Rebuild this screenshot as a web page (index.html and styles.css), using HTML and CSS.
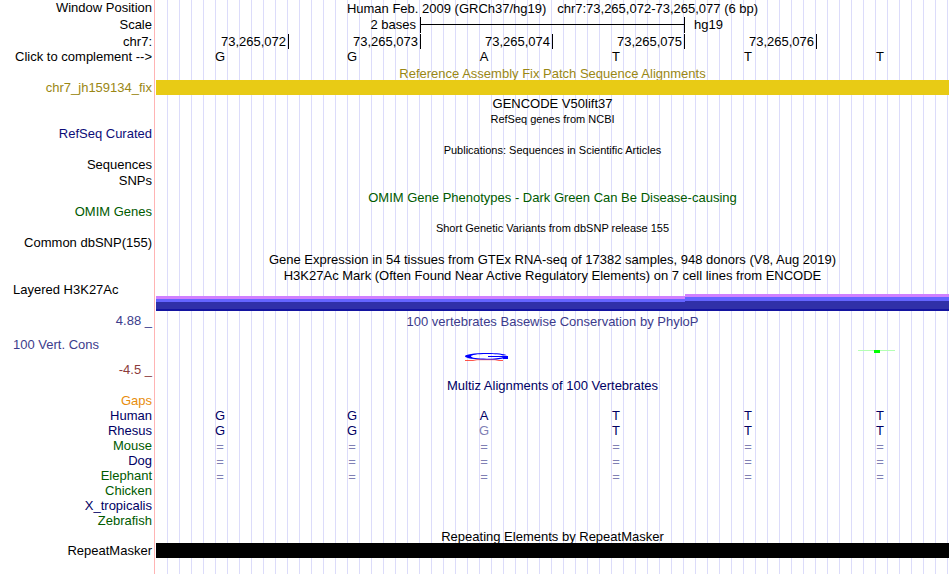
FILE: index.html
```
<!DOCTYPE html>
<html lang="en">
<head>
    <meta charset="UTF-8">
    <meta name="viewport" content="width=device-width, initial-scale=1.0">
    <title>Human chr7:73,265,072-73,265,077</title>
    <link rel="stylesheet" href="styles.css">
</head>
<body>
    <main class="browser">
        <!-- position and ruler -->
        <div class="row tall">
            <div class="label">Window Position</div>
            <div class="title">Human Feb. 2009 (GRCh37/hg19) &nbsp; chr7:73,265,072-73,265,077 (6 bp)</div>
        </div>
        <div class="row scale-row">
            <div class="label">Scale</div>
            <div class="bases">
                <span class="scale-size">2 bases</span>
                <span class="scale-bar"></span>
                <span class="scale-db">hg19</span>
            </div>
        </div>
        <div class="row ruler-row">
            <div class="label">chr7:</div>
            <div class="bases">
                <span class="tick">73,265,072</span>
                <span class="tick">73,265,073</span>
                <span class="tick">73,265,074</span>
                <span class="tick">73,265,075</span>
                <span class="tick">73,265,076</span>
            </div>
        </div>
        <div class="row tall">
            <button type="button" class="label">Click to complement --&gt;</button>
            <div class="bases letters">
                <span>G</span><span>G</span><span>A</span><span>T</span><span>T</span><span>T</span>
            </div>
        </div>

        <!-- fix patches -->
        <div class="row olive">
            <div class="label"></div>
            <div class="title">Reference Assembly Fix Patch Sequence Alignments</div>
        </div>
        <div class="row olive">
            <div class="label">chr7_jh159134_fix</div>
            <div class="bar gold"></div>
        </div>

        <!-- genes -->
        <div class="row tall">
            <div class="label"></div>
            <div class="title">GENCODE V50lift37</div>
        </div>
        <div class="row">
            <div class="label"></div>
            <div class="title small">RefSeq genes from NCBI</div>
        </div>
        <div class="row tall blue">
            <div class="label">RefSeq Curated</div>
        </div>
        <div class="row">
            <div class="label"></div>
            <div class="title small">Publications: Sequences in Scientific Articles</div>
        </div>
        <div class="row tall">
            <div class="label">Sequences</div>
        </div>
        <div class="row tall">
            <div class="label">SNPs</div>
        </div>
        <div class="row green">
            <div class="label"></div>
            <div class="title">OMIM Gene Phenotypes - Dark Green Can Be Disease-causing</div>
        </div>
        <div class="row tall green">
            <div class="label">OMIM Genes</div>
        </div>
        <div class="row">
            <div class="label"></div>
            <div class="title small">Short Genetic Variants from dbSNP release 155</div>
        </div>
        <div class="row tall">
            <div class="label">Common dbSNP(155)</div>
        </div>

        <!-- expression and regulation -->
        <div class="row tall">
            <div class="label"></div>
            <div class="title">Gene Expression in 54 tissues from GTEx RNA-seq of 17382 samples, 948 donors (V8, Aug 2019)</div>
        </div>
        <div class="row">
            <div class="label"></div>
            <div class="title">H3K27Ac Mark (Often Found Near Active Regulatory Elements) on 7 cell lines from ENCODE</div>
        </div>
        <div class="row signal-row">
            <div class="label left">Layered H3K27Ac</div>
            <div class="signal">
                <div class="signal-low"></div>
                <div class="signal-high"></div>
            </div>
        </div>

        <!-- conservation -->
        <div class="row slate">
            <div class="label">4.88 _</div>
            <div class="title">100 vertebrates Basewise Conservation by PhyloP</div>
        </div>
        <div class="row cons-row slate">
            <div class="label left">100 Vert. Cons</div>
            <div class="bases logos">
                <svg class="logo-g" width="46" height="34" viewBox="-2 0 46 34">
                    <path fill="none" stroke="#ff2a1a" stroke-width="0.8" d="M0 32.5H8L12 31.7H30L34 32.5H38"/>
                    <path fill="#0000ff" d="M42 27.2C39 25.9 32 25 22 25C9 25 0 26.4 0 28.3C0 30.3 9 31.6 22 31.6C29 31.6 35 31.2 38 30.4V31H43V28H23V28.9H38C35 30 29 30.7 22 30.7C12 30.7 6 29.8 6 28.3C6 26.8 12 25.9 22 25.9C30 25.9 36 26.4 38 27.4Z"/>
                </svg>
                <svg class="logo-t" width="48" height="34" viewBox="0 0 48 34">
                    <path fill="#b4ffb4" d="M0 22H37V23H0Z"/>
                    <path fill="#00ff00" d="M16 22H22V25H16Z"/>
                </svg>
            </div>
        </div>
        <div class="row maroon">
            <div class="label">-4.5 _</div>
        </div>

        <!-- multiz alignment -->
        <div class="row tall navy">
            <div class="label"></div>
            <div class="title">Multiz Alignments of 100 Vertebrates</div>
        </div>
        <div class="row orange">
            <div class="label">Gaps</div>
        </div>
        <div class="row navy">
            <div class="label">Human</div>
            <div class="bases letters">
                <span>G</span><span>G</span><span>A</span><span>T</span><span>T</span><span>T</span>
            </div>
        </div>
        <div class="row navy">
            <div class="label">Rhesus</div>
            <div class="bases letters">
                <span>G</span><span>G</span><span class="faded">G</span><span>T</span><span>T</span><span>T</span>
            </div>
        </div>
        <div class="row green">
            <div class="label">Mouse</div>
            <div class="bases letters unaligned">
                <span>=</span><span>=</span><span>=</span><span>=</span><span>=</span><span>=</span>
            </div>
        </div>
        <div class="row navy">
            <div class="label">Dog</div>
            <div class="bases letters unaligned">
                <span>=</span><span>=</span><span>=</span><span>=</span><span>=</span><span>=</span>
            </div>
        </div>
        <div class="row green">
            <div class="label">Elephant</div>
            <div class="bases letters unaligned">
                <span>=</span><span>=</span><span>=</span><span>=</span><span>=</span><span>=</span>
            </div>
        </div>
        <div class="row green">
            <div class="label">Chicken</div>
        </div>
        <div class="row navy">
            <div class="label">X_tropicalis</div>
        </div>
        <div class="row green">
            <div class="label">Zebrafish</div>
        </div>

        <!-- repeats -->
        <div class="row">
            <div class="label"></div>
            <div class="title">Repeating Elements by RepeatMasker</div>
        </div>
        <div class="row">
            <div class="label">RepeatMasker</div>
            <div class="bar black"></div>
        </div>
    </main>
</body>
</html>
```
FILE: styles.css
```
body {
    margin: 0;
    background-color: white;
    color: #000;
    font-family: "Liberation Sans", Arial, Helvetica, sans-serif;
    font-size: 13px;
    line-height: 15px;
}
.browser {
    box-sizing: border-box;
    min-height: 100vh;
    padding-right: 1px;
    /* red divider, white label column, then a guideline every 12px */
    background:
        linear-gradient(#ffb4b4, #ffb4b4) 154px 0 / 1px 100% no-repeat,
        linear-gradient(white, white) 0 0 / 156px 100% no-repeat,
        repeating-linear-gradient(to right, #dcdcfa 0 1px, transparent 1px 12px) 11px 0;
}
.row {
    display: grid;
    grid-template-columns: 152px 1fr;
    column-gap: 4px;
    min-height: 15px;
}
.tall {
    min-height: 16px;
    line-height: 16px;
}
.label {
    text-align: right;
    white-space: nowrap;
}
.label.left {
    padding-left: 13px;
    text-align: left;
}
button.label {
    padding: 0;
    border: none;
    background: none;
    color: inherit;
    font: inherit;
    cursor: pointer;
}
.title {
    padding-top: 1px;
    margin-bottom: -1px;
    text-align: center;
    white-space: nowrap;
}
.small {
    font-size: 11px;
}
.bases {
    display: grid;
    grid-template-columns: repeat(6, 1fr);
    margin-right: 1px;
}
.letters {
    text-align: center;
}
.letters span {
    padding-right: 4px;
}
.scale-row {
    padding-top: 1px;
    line-height: 16px;
}
.scale-size {
    grid-column: 1 / 3;
    padding-right: 4px;
    text-align: right;
}
.scale-bar {
    grid-column: 3 / 5;
    margin-right: -1px;
    border: solid #000;
    border-width: 0 1px;
    background: linear-gradient(#000, #000) 0 7px / 100% 1px no-repeat;
}
.scale-db {
    padding-left: 10px;
}
.ruler-row {
    padding-top: 1px;
}
.tick {
    margin-right: -1px;
    padding-right: 2px;
    border-right: 1px solid #000;
    text-align: right;
}
.gold {
    background-color: #e8cb15;
}
.black {
    background-color: #000;
}
.signal-row {
    padding-bottom: 2px;
}
.signal {
    display: grid;
    grid-template-columns: 2fr 1fr;
    align-items: end;
    height: 29px;
}
.signal-low {
    height: 15px;
    background: linear-gradient(#d080ff 3px, #6464ff 3px 6px, #3030a8 6px 13px, #1414a0 13px);
}
.signal-high {
    height: 17px;
    background: linear-gradient(#d080ff 3px, #6464ff 3px 7px, #3030a8 7px 15px, #1414a0 15px);
}
.cons-row {
    line-height: 34px;
}
.logos {
    justify-items: center;
}
.logos svg {
    display: block;
}
.logo-g {
    grid-column: 3;
}
.logo-t {
    grid-column: 6;
}
.olive {
    color: #9a8714;
}
.blue {
    color: #0c0c78;
}
.navy {
    color: #000064;
}
.green {
    color: #005a00;
}
.slate {
    color: #3c3c8c;
}
.maroon {
    color: #8c3c3c;
}
.orange {
    color: #e88d0c;
}
.faded,
.unaligned {
    color: #8080b4;
}
.unaligned {
    padding-top: 1px;
    margin-bottom: -1px;
}
```
